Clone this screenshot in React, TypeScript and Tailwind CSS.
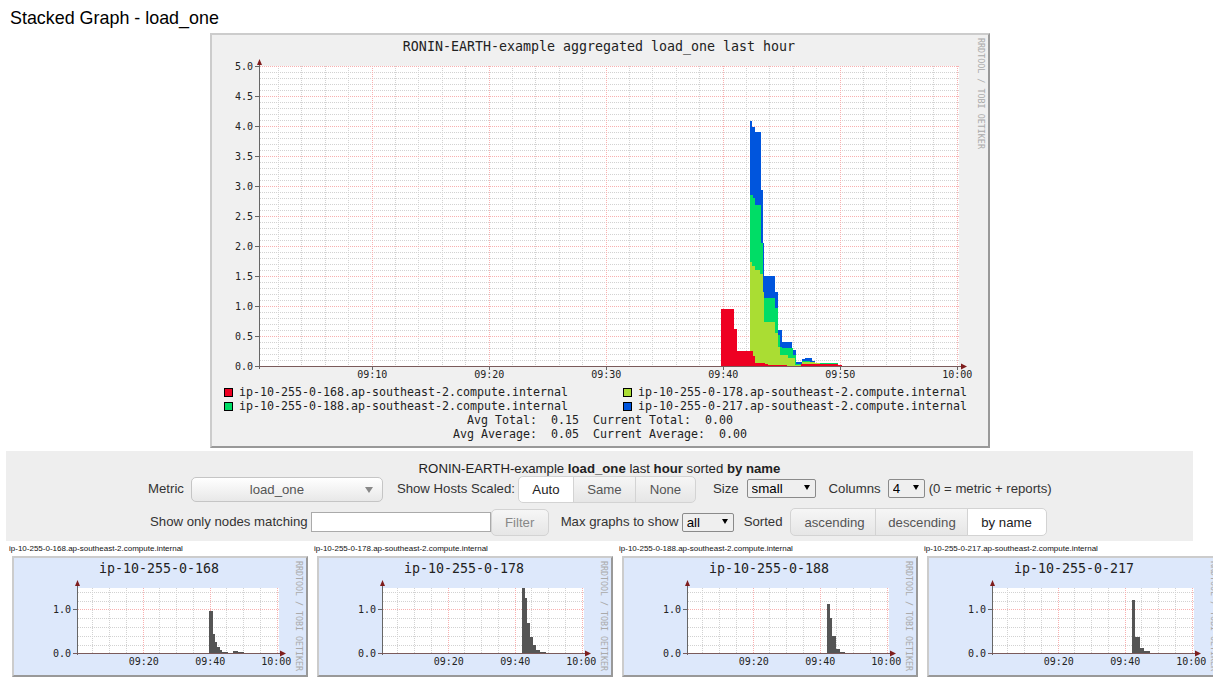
import React from 'react';

type Step = [number, number];

const MONO = { fontFamily: '"DejaVu Sans Mono", monospace' };

const BASE = 366;

// each layer is [x, top y] steps in page pixels, painted back to front
const layers: { color: string; steps: Step[] }[] = [
  {
    color: '#0055dd',
    steps: [
      [750, 121], [752, 127], [755, 132], [761, 190], [763, 243], [764, 276], [775, 292],
      [778, 330], [782, 342], [792, 350], [796, 362], [802, 359], [805, 358], [812, 361],
      [815, 363], [838, 365], [842, BASE],
    ],
  },
  {
    color: '#00dd66',
    steps: [
      [750, 195], [753, 198], [755, 205], [761, 243], [763, 298], [775, 308], [778, 335],
      [780, 347], [782, 348], [793, 355], [796, 364], [802, 361], [810, 362], [815, 363],
      [838, 365], [842, BASE],
    ],
  },
  {
    color: '#aadd33',
    steps: [
      [750, 262], [752, 266], [755, 270], [760, 274], [763, 292], [764, 322], [775, 333],
      [778, 347], [780, 355], [788, 358], [795, 365], [802, 362], [815, 363], [820, 364],
      [838, 365], [842, BASE],
    ],
  },
  {
    color: '#ee0022',
    steps: [
      [721, 309], [734, 329], [737, 351], [753, 356], [755, 363], [765, 364], [768, 365],
      [787, 366], [801, 364], [838, 365], [842, BASE],
    ],
  },
];

const stepPath = (steps: Step[], base: number) => {
  let d = `M${steps[0][0]} ${base}`;
  steps.forEach(([x, y], i) => {
    const next = steps[i + 1];
    d += ` L${x} ${y}`;
    if (next) d += ` L${next[0]} ${y}`;
  });
  return d + ` L${steps[steps.length - 1][0]} ${base} Z`;
};

const range = (n: number) => Array.from({ length: n }, (_, i) => i);

// 1px on / 1px off tiles for the grid, defined once in the big graph
const GridPatterns: React.FC = () => (
  <defs>
    <pattern id="h-minor" patternUnits="userSpaceOnUse" width={2} height={1}><rect width={1} height={1} fill="#d2d2d2" /></pattern>
    <pattern id="h-major" patternUnits="userSpaceOnUse" width={2} height={1}><rect width={1} height={1} fill="#f8b0b0" /></pattern>
    <pattern id="v-minor" patternUnits="userSpaceOnUse" width={1} height={2}><rect width={1} height={1} fill="#d2d2d2" /></pattern>
    <pattern id="v-major" patternUnits="userSpaceOnUse" width={1} height={2}><rect width={1} height={1} fill="#f8b0b0" /></pattern>
  </defs>
);

const HGrid: React.FC<{ x: number; y: number; w: number; major?: boolean }> = ({ x, y, w, major }) => (
  <rect x={x} y={y} width={w} height={1} fill={major ? 'url(#h-major)' : 'url(#h-minor)'} />
);

const VGrid: React.FC<{ x: number; y: number; h: number; major?: boolean }> = ({ x, y, h, major }) => (
  <rect x={x} y={y} width={1} height={h} fill={major ? 'url(#v-major)' : 'url(#v-minor)'} />
);

const StackedGraph: React.FC = () => {
  const left = 259;
  const right = 959;
  const top = 66;
  const yLabels = ['5.0', '4.5', '4.0', '3.5', '3.0', '2.5', '2.0', '1.5', '1.0', '0.5', '0.0'];
  const xLabels = ['09:10', '09:20', '09:30', '09:40', '09:50', '10:00'];
  return (
    <svg viewBox="212 35 776 411" width={776} height={411} className="block">
      <GridPatterns />
      <rect x={left} y={top} width={right - left} height={BASE - top} fill="#fff" />
      {range(50).filter((i) => i % 5 !== 0).map((i) => (
        <HGrid key={i} x={left} w={right - left} y={top + i * 6} />
      ))}
      {range(30).filter((i) => (i + 1) % 5 !== 0).map((i) => (
        <VGrid key={i} x={Math.round(254.6 + (i + 1) * 23.4)} y={top} h={BASE - top} />
      ))}
      {range(10).map((i) => (
        <HGrid key={i} major x={left} w={right - left} y={top + i * 30} />
      ))}
      {range(6).map((i) => (
        <VGrid key={i} major x={Math.round(371.6 + i * 117)} y={top} h={BASE - top} />
      ))}
      {layers.map((l) => (
        <path key={l.color} d={stepPath(l.steps, BASE)} fill={l.color} shapeRendering="crispEdges" />
      ))}
      <line x1={left + 0.5} x2={left + 0.5} y1={62} y2={369} stroke="#666" />
      <line x1={255} x2={962} y1={BASE + 0.5} y2={BASE + 0.5} stroke="#7a5a5a" />
      {range(11).map((i) => (
        <line key={i} x1={255} x2={259} y1={top + i * 30 + 0.5} y2={top + i * 30 + 0.5} stroke="#666" />
      ))}
      {range(6).map((i) => (
        <line key={i} x1={Math.round(371.6 + i * 117) + 0.5} x2={Math.round(371.6 + i * 117) + 0.5} y1={367} y2={370} stroke="#666" />
      ))}
      <path d="M257 65 L262 65 L259.5 59 Z" fill="#7f1d1d" />
      <path d="M961 363.5 L961 369.5 L967 366.5 Z" fill="#7f1d1d" />
      <g style={MONO} fontSize={10} fill="#222">
        {yLabels.map((t, i) => (
          <text key={t} x={253} y={top + i * 30 + 4} textAnchor="end">{t}</text>
        ))}
        {xLabels.map((t, i) => (
          <text key={t} x={372.2 + i * 117} y={378} textAnchor="middle">{t}</text>
        ))}
      </g>
      <g style={MONO} fill="#222">
        <text x={599} y={51} fontSize={13.3} textAnchor="middle">RONIN-EARTH-example aggregated load_one last hour</text>
        <g fontSize={11.63}>
          <text x={239} y={396}>ip-10-255-0-168.ap-southeast-2.compute.internal</text>
          <text x={638} y={396}>ip-10-255-0-178.ap-southeast-2.compute.internal</text>
          <text x={239} y={410}>ip-10-255-0-188.ap-southeast-2.compute.internal</text>
          <text x={638} y={410}>ip-10-255-0-217.ap-southeast-2.compute.internal</text>
          <text x={600} y={424} textAnchor="middle" className="whitespace-pre">{'Avg Total:  0.15  Current Total:  0.00'}</text>
          <text x={600} y={438} textAnchor="middle" className="whitespace-pre">{'Avg Average:  0.05  Current Average:  0.00'}</text>
        </g>
      </g>
      <rect x={224.5} y={388.5} width={8} height={8} fill="#ee0022" stroke="#000" />
      <rect x={623.5} y={388.5} width={8} height={8} fill="#aadd33" stroke="#000" />
      <rect x={224.5} y={402.5} width={8} height={8} fill="#00dd66" stroke="#000" />
      <rect x={623.5} y={402.5} width={8} height={8} fill="#0055dd" stroke="#000" />
      <text x={978} y={38} transform="rotate(90 978 38)" style={MONO} fontSize={8.4} fill="#aaa">RRDTOOL / TOBI OETIKER</text>
    </svg>
  );
};

// steps are relative to the inside of the card's border
const hosts: { name: string; steps: Step[] }[] = [
  { name: '168', steps: [[195, 53], [199, 76], [201, 84], [203, 89], [206, 92], [208, 94], [214, 95], [219, 93], [224, 94], [230, 95]] },
  { name: '178', steps: [[203, 30], [206, 40], [208, 65], [211, 79], [214, 87], [217, 92], [221, 94], [227, 95]] },
  { name: '188', steps: [[203, 46], [206, 60], [208, 78], [212, 91], [216, 94], [221, 95]] },
  { name: '217', steps: [[203, 42], [206, 79], [211, 90], [215, 93], [221, 95]] },
];

const Thumb: React.FC<{ name: string; steps: Step[] }> = ({ name, steps }) => {
  const base = 95;
  return (
    <div className="w-[305px] shrink-0">
      <div className="h-[14px] text-[8px] leading-[14px] text-[#111]">ip-10-255-0-{name}.ap-southeast-2.compute.internal</div>
      <div className="ml-[3px] w-[296px] border-2 border-t-[#ccc] border-l-[#ccc] border-r-[#999] border-b-[#999] bg-[#dde8fb]">
        <svg viewBox="0 0 292 117" width={292} height={117} className="block">
          <rect x={63} y={30} width={202} height={65} fill="#fff" />
          {[34, 43, 60, 69, 78, 87].map((y) => (
            <HGrid key={y} x={63} w={202} y={y} />
          ))}
          {range(12).filter((i) => i % 4 !== 3).map((i) => (
            <VGrid key={i} x={Math.round(78.4 + i * 16.75)} y={30} h={base - 30} />
          ))}
          <HGrid major x={63} w={202} y={51} />
          {[3, 7, 11].map((i) => (
            <VGrid key={i} major x={Math.round(78.4 + i * 16.75)} y={30} h={base - 30} />
          ))}
          <path d={stepPath(steps, base)} fill="#555" shapeRendering="crispEdges" />
          <line x1={63.5} x2={63.5} y1={26} y2={97} stroke="#666" />
          <line x1={59} x2={268} y1={base + 0.5} y2={base + 0.5} stroke="#7a5a5a" />
          <line x1={59} x2={63} y1={51.5} y2={51.5} stroke="#666" />
          <path d="M61 28 L66 28 L63.5 22 Z" fill="#7f1d1d" />
          <path d="M266 92.5 L266 98.5 L272 95.5 Z" fill="#7f1d1d" />
          <g style={MONO} fill="#222">
            <text x={145} y={15} fontSize={13.3} textAnchor="middle">ip-10-255-0-{name}</text>
            <g fontSize={10}>
              <text x={57} y={54.7} textAnchor="end">1.0</text>
              <text x={57} y={98.7} textAnchor="end">0.0</text>
              <text x={129.7} y={107} textAnchor="middle">09:20</text>
              <text x={196.3} y={107} textAnchor="middle">09:40</text>
              <text x={262.3} y={107} textAnchor="middle">10:00</text>
            </g>
          </g>
          <text x={282} y={3} transform="rotate(90 282 3)" style={MONO} fontSize={8.3} fill="#aaa">RRDTOOL / TOBI OETIKER</text>
        </svg>
      </div>
    </div>
  );
};

const idle = 'flex items-center justify-center border border-[#d3d3d3] bg-gradient-to-b from-[#f6f6f6] to-[#e6e6e6] text-[#555]';
const active = 'flex items-center justify-center border border-[#d3d3d3] bg-white text-[#212121]';

const NativeSelect: React.FC<{ value: string; className: string }> = ({ value, className }) => (
  <div className={`relative mb-[2px] ${className}`}>
    <select defaultValue={value} className="h-full w-full appearance-none rounded-[2px] border border-[#8a8a8a] bg-[#efefef] pl-[4px] text-[13.3px] leading-none text-black">
      <option value={value}>{value}</option>
    </select>
    <span className="pointer-events-none absolute right-[6px] top-[6px] h-0 w-0 border-x-[3px] border-t-[5px] border-x-transparent border-t-black" />
  </div>
);

const Label: React.FC<{ className?: string; children: React.ReactNode }> = ({ className = '', children }) => (
  <span className={`pb-[2px] ${className}`}>{children}</span>
);

const Controls: React.FC = () => (
  <div className="ml-[6px] mt-[3px] h-[90px] w-[1187px] bg-[#eeeeee] text-[13.2px] text-[#333]">
    <div className="pt-[10px] text-center leading-[15px] text-[#222]">
      RONIN-EARTH-example <b>load_one</b> last <b>hour</b> sorted <b>by name</b>
    </div>
    <div className="flex h-[27px] items-center pl-[142px]">
      <Label>Metric</Label>
      <div className="relative ml-[7px] flex h-[25px] w-[192px] items-center justify-center rounded-[5px] border border-[#c5c5c5] bg-gradient-to-b from-[#ffffff] to-[#e8e8e8] pr-[20px] text-[#555]">
        load_one
        <span className="absolute right-[9px] top-[9px] h-0 w-0 border-x-[4px] border-t-[6px] border-x-transparent border-t-[#888]" />
      </div>
      <Label className="ml-[14px]">Show Hosts Scaled:</Label>
      <div className="ml-[3px] flex h-[27px] overflow-hidden">
        <div className={`${active} w-[56px] rounded-l-[5px]`}>Auto</div>
        <div className={`${idle} -ml-px w-[63px]`}>Same</div>
        <div className={`${idle} -ml-px w-[61px] rounded-r-[5px]`}>None</div>
      </div>
      <Label className="ml-[17px]">Size</Label>
      <NativeSelect value="small" className="ml-[8px] h-[19px] w-[69px]" />
      <Label className="ml-[13px]">Columns</Label>
      <NativeSelect value="4" className="ml-[7px] h-[19px] w-[37px]" />
      <Label className="ml-[4px]">(0 = metric + reports)</Label>
    </div>
    <div className="mt-[5px] flex h-[28px] items-center pl-[144px]">
      <span>Show only nodes matching</span>
      <input type="text" className="ml-[3px] h-[20px] w-[180px] border border-[#aaa] bg-white" />
      <div className={`${idle} h-[27px] w-[58px] rounded-[5px] pt-[1px] text-[#888]`}>Filter</div>
      <span className="ml-[12px]">Max graphs to show</span>
      <div className="-mb-[2px] ml-[3px] flex"><NativeSelect value="all" className="h-[19px] w-[52px]" /></div>
      <span className="ml-[10px]">Sorted</span>
      <div className="ml-[7px] flex h-[28px]">
        <div className={`${idle} w-[86px] rounded-l-[5px] pl-[4px] pt-[1px]`}>ascending</div>
        <div className={`${idle} -ml-px w-[93px] pl-[2px] pt-[1px]`}>descending</div>
        <div className={`${active} -ml-px w-[80px] rounded-r-[5px] pt-[1px]`}>by name</div>
      </div>
    </div>
  </div>
);

export default function App() {
  return (
    <div className="h-[686px] w-[1213px] overflow-hidden bg-white text-black" style={{ fontFamily: '"Liberation Sans", Arial, sans-serif' }}>
      <h1 className="h-[33px] pl-[10px] pt-[8px] text-[17.9px] font-normal leading-[20px]">Stacked Graph - load_one</h1>
      <div className="ml-[210px] w-[780px] border-2 border-t-[#ccc] border-l-[#ccc] border-r-[#999] border-b-[#999] bg-[#f0f0f0]">
        <StackedGraph />
      </div>
      <Controls />
      <div className="flex pl-[9px] pt-[1px]">
        {hosts.map((h) => (
          <Thumb key={h.name} name={h.name} steps={h.steps} />
        ))}
      </div>
    </div>
  );
}
